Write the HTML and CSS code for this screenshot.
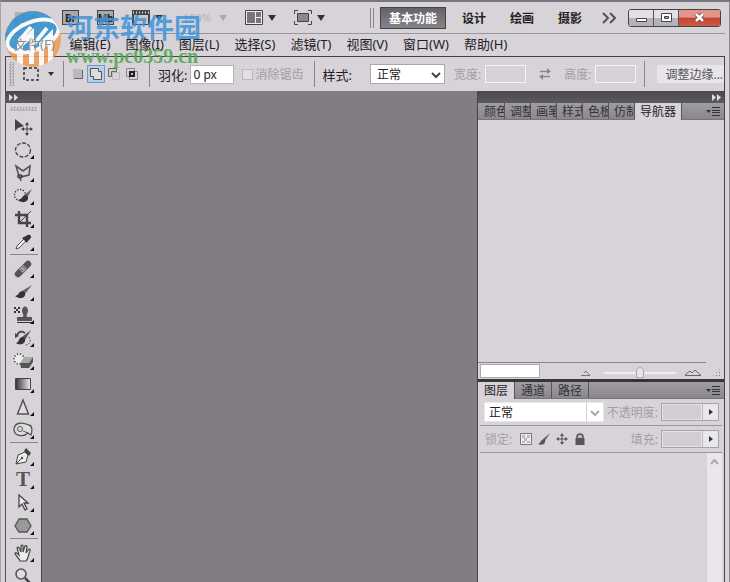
FILE: index.html
```
<!DOCTYPE html>
<html lang="zh-CN">
<head>
    <meta charset="UTF-8">
    <meta name="viewport" content="width=device-width, initial-scale=1.0">
    <title>Photoshop</title>
    <link rel="stylesheet" href="styles.css">
</head>
<body>
<div class="window">
    <!-- 标题栏 -->
    <header class="appbar">
        <b class="ps">Ps</b>
        <button class="app-icon badge">Br</button>
        <button class="app-icon badge">Mb</button>
        <button class="app-icon film" aria-label="查看额外内容">
            <svg width="18" height="15"><path d="M0 0h18v15H0z" fill="#444"/><path d="M2 5h14v9H2z" fill="#c9c7cb"/><path d="M1 2.500h16" stroke="#ddd" stroke-width="2" stroke-dasharray="1 2"/></svg>
            <i class="arrow"></i>
        </button>
        <button class="app-icon zoom">100%<i class="arrow"></i></button>
        <button class="app-icon" aria-label="排列文档">
            <svg width="18" height="15"><path d="M.5.5h17v14H.5z" fill="#eee" stroke="#444"/><path d="M2 2h8v11H2zM11 2h5v5h-5zM11 8h5v5h-5z" fill="#77757a"/></svg>
            <i class="arrow"></i>
        </button>
        <button class="app-icon" aria-label="屏幕模式">
            <svg width="18" height="15"><path d="M.5 4V.5H4M14 .5h3.500V4M17.500 11v3.500H14M4 14.500H.5V11" fill="none" stroke="#444"/><path d="M3.500 3.500h11v8h-11z" fill="#8a888c" stroke="#444"/></svg>
            <i class="arrow"></i>
        </button>
        <nav class="workspaces">
            <button class="ws on">基本功能</button>
            <button class="ws">设计</button>
            <button class="ws">绘画</button>
            <button class="ws">摄影</button>
            <button class="ws more" aria-label="更多"><svg width="14" height="12"><path d="M1 1l5 5-5 5M8 1l5 5-5 5" fill="none" stroke="#555" stroke-width="2"/></svg></button>
        </nav>
        <div class="win-btns">
            <button aria-label="最小化"><svg width="13" height="10"><path d="M1.500 5.500h10v3h-10z" fill="#fff" stroke="#444"/></svg></button>
            <button aria-label="最大化"><svg width="13" height="11"><path d="M1.500 1.500h10v8h-10z" fill="#fff" stroke="#444"/><path d="M4.500 4.500h4v2h-4z" fill="#aaa" stroke="#444"/></svg></button>
            <button class="close" aria-label="关闭"><svg width="13" height="11"><path d="M3 2l7 7M10 2l-7 7" stroke="#733" stroke-width="4"/><path d="M3 2l7 7M10 2l-7 7" stroke="#fff" stroke-width="2.500"/></svg></button>
        </div>
    </header>

    <!-- 菜单 -->
    <nav class="menu">
        <a href="#">文件(F)</a>
        <a href="#">编辑(E)</a>
        <a href="#">图像(I)</a>
        <a href="#">图层(L)</a>
        <a href="#">选择(S)</a>
        <a href="#">滤镜(T)</a>
        <a href="#">视图(V)</a>
        <a href="#">窗口(W)</a>
        <a href="#">帮助(H)</a>
    </nav>

    <!-- 选项栏 -->
    <div class="options">
        <span class="grip"></span>
        <button class="preset" aria-label="矩形选框工具">
            <svg width="16" height="14"><path d="M1 1h14v12H1z" fill="none" stroke="#333" stroke-width="1.500" stroke-dasharray="3 2"/></svg>
            <i class="arrow small"></i>
        </button>
        <div class="modes">
            <button aria-label="新选区"><svg width="14" height="14"><path d="M3 3h9v9H3z" fill="#666"/><path d="M2 2h9v9H2z" fill="#bbb9bd"/></svg></button>
            <button class="on" aria-label="添加到选区"><svg width="14" height="14"><path d="M1.500 1.500h8v3h3v8h-8v-3h-3z" fill="#ddd" stroke="#555"/></svg></button>
            <button aria-label="从选区减去"><svg width="14" height="14"><path d="M1.500 9.500v-8h8v3h-5v5z" fill="#ccc" stroke="#666"/><path d="M5.500 5.500h7v7h-7z" fill="none" stroke="#bbb"/></svg></button>
            <button aria-label="与选区交叉"><svg width="14" height="14"><path d="M1.500 1.500h8v8h-8zM4.500 4.500h8v8h-8z" fill="none" stroke="#888"/><path d="M5 5h4v4H5z" fill="#bbb" stroke="#222" stroke-width="2"/></svg></button>
        </div>
        <div class="group feather">
            <label for="feather">羽化:</label>
            <input id="feather" type="text" value="0 px">
            <label class="check off"><input type="checkbox" disabled>消除锯齿</label>
        </div>
        <div class="group style">
            <label for="style">样式:</label>
            <span class="select"><select id="style"><option>正常</option></select><svg width="10" height="7"><path d="M1 1l4 4 4-4" fill="none" stroke="#444" stroke-width="2"/></svg></span>
            <label class="off" for="w">宽度:</label>
            <input id="w" class="empty" type="text" disabled>
            <svg class="swap" width="12" height="12"><path d="M1 3.500h8M3 8.500h8" stroke="#888" stroke-width="1.500"/><path d="M8 0l4 3.500L8 6zM4 6L0 8.500 4 12z" fill="#888"/></svg>
            <label class="off" for="h">高度:</label>
            <input id="h" class="empty" type="text" disabled>
        </div>
        <button class="refine">调整边缘...</button>
    </div>

    <main class="work">
        <!-- 工具箱 -->
        <aside class="toolbox">
            <div class="bar"><svg width="9" height="7"><path d="M0 0l4 3.500L0 7zM5 0l4 3.500L5 7z" fill="#ddd"/></svg></div>
            <span class="grip-h"></span>
            <button class="tool single" aria-label="移动"><svg viewBox="0 0 18 18"><path d="M1 1v12l3-3 6-2z" fill="#444"/><path d="M13 6v10M8 11h10" stroke="#444"/><path d="M13 4l2 3h-4zM13 18l2-3h-4zM7 11l3-2v4zM19 11l-3-2v4z" fill="#444"/></svg></button>
            <button class="tool" aria-label="椭圆选框"><svg viewBox="0 0 18 18"><ellipse cx="9" cy="9" rx="7.500" ry="7" fill="none" stroke="#444" stroke-width="1.300" stroke-dasharray="4 1.500"/></svg></button>
            <button class="tool" aria-label="多边形套索"><svg viewBox="0 0 18 18"><path d="M5 12L2 2l7 5 7-5-1 9-9 2z" fill="none" stroke="#555" stroke-width="1.600"/><path d="M6 11c-3 0-3 3 0 3s3-3 0-3M6 14l1 3" fill="none" stroke="#444" stroke-width="1.300"/></svg></button>
            <button class="tool" aria-label="快速选择"><svg viewBox="0 0 18 18"><circle cx="6" cy="8" r="5.500" fill="none" stroke="#333" stroke-width="1.300" stroke-dasharray="1.300 1.500"/><path d="M18 2l-8 6 3 3z" fill="#666"/><path d="M12 8c-4 0-3 4-8 5 4 4 11 2 10-3z" fill="#333"/></svg></button>
            <button class="tool" aria-label="裁剪"><svg viewBox="0 0 18 18"><path d="M5 1v12h12M1 5h12v12" fill="none" stroke="#444" stroke-width="2.400"/><path d="M5 13L17 1" stroke="#444"/></svg></button>
            <button class="tool" aria-label="吸管"><svg viewBox="0 0 18 18"><path d="M2 16l1-3 7-7 2 2-7 7z" fill="#eee" stroke="#555"/><path d="M8 5l5 5 1-2 2-2c3-3-1-6-4-3l-2 1z" fill="#333"/></svg></button>
            <hr>
            <button class="tool" aria-label="污点修复画笔"><svg viewBox="0 0 18 18"><path d="M4 14L14 4" stroke="#555" stroke-width="6.500" stroke-linecap="round"/><path d="M7 11l4-4" stroke="#aaa" stroke-width="5"/><path d="M7 9l2 2M9 7l2 2" stroke="#555"/></svg></button>
            <button class="tool" aria-label="画笔"><svg viewBox="0 0 18 18"><path d="M18 2L8 8l3 3z" fill="#666"/><path d="M9 8c-5 0-3 4-8 5 5 4 11 2 10-3z" fill="#333"/></svg></button>
            <button class="tool" aria-label="仿制图章"><svg viewBox="0 0 18 18"><path d="M0 1h2v2H0zM4 1h2v2H4zM2 3h2v2H2zM0 5h2v2H0zM4 5h2v2H4z" fill="#333"/><path d="M3 11h6c1-3-1-4-1-6 0-6 6-6 6 0 0 2-2 3-1 6h5v4H3z" fill="#555"/><path d="M3 16.500h15" stroke="#333"/></svg></button>
            <button class="tool" aria-label="历史记录画笔"><svg viewBox="0 0 18 18"><path d="M17 1L8 8l3 3z" fill="#555"/><path d="M9 8c-5 0-3 5-7 6 4 3 10 1 9-4z" fill="#333"/><path d="M3 6c2-4 5-4 8-2" fill="none" stroke="#444" stroke-width="1.800"/><path d="M1 4v5l4-2z" fill="#444"/><path d="M15 8c3 4 0 8-4 8" fill="none" stroke="#444" stroke-dasharray="1.500 1.500"/></svg></button>
            <button class="tool" aria-label="橡皮擦"><svg viewBox="0 0 18 18"><circle cx="5" cy="7" r="5" fill="#eee" stroke="#444" stroke-width="2" stroke-dasharray="1 2"/><path d="M10 5h9l-4 6H6z" fill="#aaa"/><path d="M6 11h9v5H7zM15 11l4-6v5l-4 6z" fill="#555"/></svg></button>
            <button class="tool" aria-label="渐变"><svg viewBox="0 0 18 18"><defs><linearGradient id="g"><stop stop-color="#333"/><stop offset="1" stop-color="#eee"/></linearGradient></defs><path d="M1.500 3.500h15v11h-15z" fill="url(#g)" stroke="#444"/></svg></button>
            <button class="tool" aria-label="锐化"><svg viewBox="0 0 18 18"><path d="M9 2L3.500 16h11z" fill="#ddd" stroke="#555" stroke-width="1.500"/></svg></button>
            <button class="tool" aria-label="海绵"><svg viewBox="0 0 18 18"><path d="M0 8c1-8 10-6 15-4 4 1 3 7 2 10l-3-2c-4 4-14 4-14-4z" fill="#ddd" stroke="#555" stroke-width="1.300"/><circle cx="6" cy="8" r="2.500" fill="none" stroke="#555"/><path d="M9 10l5 2" stroke="#555"/></svg></button>
            <hr>
            <button class="tool" aria-label="钢笔"><svg viewBox="0 0 18 18"><path d="M2 16L4 7l7-3 3 3-2 7z" fill="#eee" stroke="#444"/><path d="M2 16l6-6" stroke="#444"/><circle cx="8" cy="10" r="1.200" fill="#444"/><path d="M10 3l2-3 5 5-2 3z" fill="#444"/></svg></button>
            <button class="tool type" aria-label="文字">T</button>
            <button class="tool" aria-label="路径选择"><svg viewBox="0 0 18 18"><path d="M5 1v12l3-3 3 6 2-1-3-6h4z" fill="#eee" stroke="#444" stroke-width="1.300"/></svg></button>
            <button class="tool" aria-label="多边形"><svg viewBox="0 0 18 18"><path d="M5 2h8l4 7-4 6H5L1 9z" fill="#999" stroke="#555" stroke-width="1.300"/></svg></button>
            <hr>
            <button class="tool" aria-label="抓手"><svg viewBox="0 0 18 18"><path d="M6 17c-1-3-5-6-5-8 2-1 3 1 4 2L3 4c1-2 2 0 2 0l2 4V2c1-2 2 0 2 0v6l2-6c2-1 2 1 2 1l-1 6 3-4c2 0 1 2 1 2-2 4-1 7-4 10z" fill="#eee" stroke="#444" stroke-width="1.200"/></svg></button>
            <button class="tool single" aria-label="缩放"><svg viewBox="0 0 18 18"><circle cx="7" cy="7" r="5" fill="#ddd" stroke="#555" stroke-width="1.600"/><path d="M11 11l6 6" stroke="#444" stroke-width="2.500"/></svg></button>
        </aside>

        <div class="canvas"></div>

        <!-- 面板 -->
        <aside class="panels">
            <div class="bar right"><svg width="9" height="7"><path d="M0 0l4 3.500L0 7zM5 0l4 3.500L5 7z" fill="#ddd"/></svg></div>
            <section class="navigator">
                <div class="tabs clip">
                    <button>颜色</button>
                    <button>调整</button>
                    <button>画笔</button>
                    <button>样式</button>
                    <button>色板</button>
                    <button>仿制</button>
                    <button class="on">导航器</button>
                    <svg class="flyout" width="14" height="9"><path d="M0 3h5L2.500 6zM6 0h8v1H6zM6 3h8v1H6zM6 5h8v1H6zM6 8h8v1H6z" fill="#333"/></svg>
                </div>
                <div class="preview"></div>
                <div class="nav-foot">
                    <input type="text" aria-label="缩放比例">
                    <svg width="12" height="8"><path d="M1 6.500h9L6 2 4 4" fill="none" stroke="#777"/></svg>
                    <input type="range" min="0" max="100" value="50" aria-label="缩放滑块">
                    <svg width="18" height="8"><path d="M1 6.500h16L11 1 8 4 6 2 1 6" fill="none" stroke="#666"/></svg>
                    <span class="resize"></span>
                </div>
            </section>
            <section class="layers">
                <div class="tabs">
                    <button class="on">图层</button>
                    <button>通道</button>
                    <button>路径</button>
                    <svg class="flyout" width="14" height="9"><path d="M0 3h5L2.500 6zM6 0h8v1H6zM6 3h8v1H6zM6 5h8v1H6zM6 8h8v1H6z" fill="#333"/></svg>
                </div>
                <div class="row">
                    <span class="select blend"><select aria-label="混合模式"><option>正常</option></select><svg width="10" height="7"><path d="M1 1l4 4 4-4" fill="none" stroke="#aaa" stroke-width="2"/></svg></span>
                    <label class="off push" for="opacity">不透明度:</label>
                    <span class="stepper"><input id="opacity" type="text" disabled><button aria-label="不透明度滑块"><svg width="4" height="6"><path d="M0 0l4 3-4 3z" fill="#333"/></svg></button></span>
                </div>
                <div class="row">
                    <span class="off">锁定:</span>
                    <span class="locks">
                        <svg width="12" height="12"><path d="M.5.5h11v11H.5z" fill="#eee" stroke="#777"/><path d="M2 2h3v3H2zM7 2h3v3H7zM4 5h3v3H4zM2 8h3v2H2zM7 8h3v2H7z" fill="#bbb"/></svg>
                        <svg width="12" height="12"><path d="M12 0L5 6l2 2z" fill="#666"/><path d="M6 6c-3 0-3 4-6 5 4 2 8 0 7-4z" fill="#555"/></svg>
                        <svg width="12" height="12"><path d="M6 1v10M1 6h10" stroke="#555"/><path d="M6 0l2 3H4zM6 12l2-3H4zM0 6l3-2v4zM12 6L9 4v4z" fill="#555"/></svg>
                        <svg width="12" height="12"><path d="M3 6V4c0-4 6-4 6 0v2" fill="#bbb" stroke="#555" stroke-width="1.500"/><path d="M1.500 5h9v7h-9z" fill="#555"/></svg>
                    </span>
                    <label class="off push" for="fill">填充:</label>
                    <span class="stepper"><input id="fill" type="text" disabled><button aria-label="填充滑块"><svg width="4" height="6"><path d="M0 0l4 3-4 3z" fill="#333"/></svg></button></span>
                </div>
                <div class="list"><div class="scroll"><svg width="9" height="7"><path d="M1 5l3.500-4L8 5" fill="none" stroke="#aaa" stroke-width="2"/></svg></div></div>
            </section>
        </aside>
    </main>
</div>

<!-- 水印 -->
<div class="watermark">
    <svg width="56" height="56" viewBox="0 0 56 56">
        <defs><clipPath id="disc"><circle cx="28" cy="28" r="28"/></clipPath></defs>
        <g clip-path="url(#disc)">
            <path d="M0 0h56v56H0z" fill="#f29a50"/>
            <path d="M0 0h56v17C44 40 20 42 0 38z" fill="#2f8fce"/>
            <path d="M12 33l17-16v36h-5V30l-6 5v21h-6zM34 32l14-14v36h-5V32l-4 4v20h-5z" fill="#fff"/>
            <path d="M14 30l12-14M29 33l13-16" stroke="#fff" stroke-width="4"/>
            <ellipse cx="28" cy="25" rx="27" ry="14" transform="rotate(-22 28 25)" fill="none" stroke="#fff" stroke-width="4"/>
            <circle cx="18" cy="14" r="2" fill="#fff"/>
        </g>
    </svg>
    <div>
        <b class="wm-name">河东软件园</b>
        <b class="wm-url">www.pc0359.cn</b>
    </div>
</div>
</body>
</html>
```
FILE: styles.css
```
*{
    box-sizing: border-box;
}

body{
    margin: 0;
    font-family: "Noto Sans", "Noto Sans CJK SC", sans-serif;
    font-size: 12px;
    color: #222;
}

button, input, select{
    font: inherit;
    color: inherit;
    margin: 0;
    padding: 0;
    border: 0;
    background: none;
    border-radius: 0;
}
svg{
    display: block;
    flex: none;
}
label, a, button{
    white-space: nowrap;
}

.window{
    display: flex;
    flex-direction: column;
    height: 100vh;
    overflow: hidden;
    padding: 0 4px;
    background: #d7d3d9;
    border-top: 2px solid #77757d;
    border-right: 1px solid #8a8890;
    border-left: 1px solid #a5a3aa;
}

.arrow{
    border: 4px solid transparent;
    border-top: 6px solid #333;
    border-bottom: 0;
}
.arrow.small{
    border-width: 4px 3px 0;
}
.off{
    color: #a19fa4;
}

/* 标题栏 */
.appbar{
    display: flex;
    flex: none;
    align-items: center;
    height: 32px;
    padding: 0 4px 0 8px;
    border-bottom: 1px solid #98959b;
}
.ps{
    width: 31px;
    font-size: 22px;
    line-height: 24px;
    color: #aeb0b4;
}
.app-icon{
    display: flex;
    align-items: center;
    gap: 5px;
    margin-left: 18px;
}
.badge{
    justify-content: center;
    width: 17px;
    height: 15px;
    border: 1px solid #444;
    background: #a9a7ac;
    font-size: 10px;
    line-height: 12px;
    font-weight: bold;
}
.zoom{
    margin-left: 20px;
    color: #b4b2b7;
    font-size: 11px;
    gap: 8px;
}
.zoom .arrow{
    border-top-color: #aaa8ad;
}
.workspaces{
    display: flex;
    align-items: center;
    margin-left: auto;
    padding-left: 6px;
    border-left: 4px double #88858b;
    height: 20px;
}
.ws{
    height: 22px;
    padding: 0 12px;
    font-weight: bold;
}
.ws.on{
    margin-right: 4px;
    padding: 0 8px;
    border: 1px solid #444;
    background: linear-gradient(#656368, #858288);
    color: #fff;
}
.ws.more{
    padding: 0 12px 0 8px;
}
.win-btns{
    display: flex;
    height: 18px;
    border: 1px solid #444;
    border-radius: 3px;
    overflow: hidden;
}
.win-btns button{
    display: flex;
    align-items: center;
    justify-content: center;
    width: 25px;
    border-right: 1px solid #555;
    background: linear-gradient(#e2e0e4 50%, #b5b3b9 50%);
}
.win-btns .close{
    width: 41px;
    border: 0;
    background: linear-gradient(#e2968a 45%, #c24530 50%, #cb5c44);
}

/* 菜单 */
.menu{
    position: relative;
    z-index: 2;
    display: flex;
    flex: none;
    gap: 15px;
    height: 22px;
    padding-left: 9px;
    line-height: 21px;
    font-size: 13px;
}
.menu a{
    color: #222;
    text-decoration: none;
}
.menu a:first-child{
    color: #8b8d93;
}

/* 选项栏 */
.options{
    display: flex;
    flex: none;
    align-items: center;
    height: 35px;
    border: 1px solid #444;
    border-bottom: 0;
    overflow: hidden;
}
.grip{
    width: 5px;
    height: 24px;
    margin-left: 3px;
    background: repeating-conic-gradient(#aaa 0 25%, transparent 0 50%) 0 0 / 3px 3px;
}
.preset{
    display: flex;
    align-items: center;
    gap: 9px;
    height: 26px;
    padding: 0 9px;
    border-right: 1px solid #88858b;
}
.modes{
    display: flex;
    align-items: center;
    height: 26px;
    padding: 0 8px 0 5px;
    border-right: 1px solid #88858b;
}
.modes button{
    width: 18px;
    height: 18px;
    padding: 1px;
    border: 1px solid transparent;
}
.modes .on{
    border-color: #6f9bc8;
    background: #b5cfe8;
}
.group{
    display: flex;
    align-items: center;
    height: 26px;
    padding: 0 8px;
    border-right: 1px solid #88858b;
}
.feather > label:first-child, .style > label:first-child{
    font-size: 13px;
}
#feather{
    width: 44px;
    height: 19px;
    margin: 0 8px 0 3px;
    padding-left: 2px;
    border: 1px solid #b5b3b8;
    background: #fff;
}
.check{
    display: flex;
    align-items: center;
    gap: 2px;
    padding-right: 2px;
}
.check input{
    appearance: none;
    width: 11px;
    height: 11px;
    border: 1px solid #bbb8bd;
    background: #e2dfe4;
}
.select{
    position: relative;
    display: inline-block;
    background: #fff;
    border: 1px solid #aaa8ad;
}
.select select{
    appearance: none;
    width: 100%;
    height: 100%;
    padding-left: 6px;
}
.select svg{
    position: absolute;
    right: 3px;
    top: 7px;
    pointer-events: none;
}
.style .select{
    width: 75px;
    height: 20px;
    margin: 0 9px 0 18px;
}
.empty{
    width: 41px;
    height: 18px;
    margin-left: 4px;
    border: 1px solid #f5f3f6;
    background: #d5d1d7;
}
.swap{
    margin: 0 13px;
}
.refine{
    flex: 1;
    height: 18px;
    margin-left: 12px;
    padding-left: 8px;
    background: #e8e5ea;
    color: #555;
    text-align: left;
    overflow: hidden;
}

/* 工作区 */
.work{
    display: flex;
    flex: 1;
    min-height: 0;
}
.bar{
    display: flex;
    align-items: center;
    flex: none;
    height: 12px;
    padding: 0 3px;
    background: linear-gradient(#4a484d, #5c5a5f);
}
.bar.right{
    justify-content: flex-end;
}
.toolbox{
    display: flex;
    flex-direction: column;
    flex: none;
    width: 37px;
    border-left: 1px solid #555;
    border-right: 1px solid #444;
    overflow: hidden;
}
.grip-h{
    flex: none;
    height: 4px;
    margin: 4px 4px;
    background: repeating-conic-gradient(#aaa 0 25%, transparent 0 50%) 0 0 / 3px 3px;
}
.tool{
    position: relative;
    flex: none;
    height: 23px;
    padding-left: 8px;
}
.tool svg{
    width: 18px;
    height: 18px;
    overflow: visible;
}
.tool::after{
    content: "";
    position: absolute;
    right: 7px;
    bottom: 2px;
    border-left: 4px solid transparent;
    border-bottom: 4px solid #111;
}
.tool.single::after{
    display: none;
}
.tool.type{
    padding-left: 10px;
    text-align: left;
    font-family: "Liberation Serif", serif;
    font-size: 21px;
    line-height: 21px;
    font-weight: bold;
    color: #555;
}
.toolbox hr{
    flex: none;
    width: 28px;
    margin: 1px auto 2px;
    border: 0;
    border-top: 1px solid #88858b;
}
.canvas{
    flex: 1;
    background: #827d82;
}

/* 面板 */
.panels{
    display: flex;
    flex-direction: column;
    flex: none;
    width: 248px;
    border-left: 1px solid #444;
    border-right: 1px solid #444;
}
.tabs{
    display: flex;
    flex: none;
    height: 17px;
    background: linear-gradient(#a09da2, #8a878c);
    border-bottom: 1px solid #77747a;
}
.tabs button{
    padding: 0 6px;
    border-right: 1px solid #555;
    line-height: 17px;
    color: #333;
}
.tabs .on{
    height: 17px;
    background: #d7d3d9;
    color: #222;
}
.tabs.clip{
    padding-left: 1px;
}
.tabs.clip button:not(.on){
    width: 26px;
    padding: 0 0 0 5px;
    overflow: hidden;
    text-align: left;
}
.tabs.clip .on{
    padding: 0 5px;
}
.flyout{
    margin: 4px 4px 0 auto;
}
.navigator{
    display: flex;
    flex-direction: column;
    flex: none;
    border-bottom: 3px solid #37353a;
}
.preview{
    height: 243px;
    margin-right: 18px;
    border-bottom: 1px solid #88858b;
}
.nav-foot{
    display: flex;
    align-items: center;
    height: 16px;
    padding: 0 3px 0 2px;
}
.nav-foot svg, .nav-foot input[type=range], .resize{
    margin-top: 3px;
}
.nav-foot input[type=text]{
    width: 60px;
    height: 14px;
    margin-right: 40px;
    border: 1px solid #aaa;
    background: #fff;
}
.nav-foot input[type=range]{
    appearance: none;
    flex: 1;
    min-width: 0;
    height: 12px;
    margin-left: 12px;
    margin-right: 8px;
    background: linear-gradient(#eeecf0, #eeecf0) center / 100% 2px no-repeat;
}
.nav-foot input[type=range]::-webkit-slider-thumb{
    appearance: none;
    width: 8px;
    height: 11px;
    border: 1px solid #aaa;
    border-radius: 4px 4px 0 0;
    background: #e6e4e8;
}
.resize{
    width: 9px;
    height: 9px;
    margin-left: 10px;
    background: radial-gradient(#777 1px, transparent 1px) 0 0 / 3px 3px;
    clip-path: polygon(100% 0, 100% 100%, 0 100%);
}

.layers{
    display: flex;
    flex-direction: column;
    flex: 1;
    min-height: 0;
}
.row{
    display: flex;
    flex: none;
    align-items: center;
    height: 27px;
    margin: 0 2px;
    padding: 0 3px 0 5px;
    border-bottom: 1px solid #98959b;
}
.blend{
    width: 120px;
    height: 20px;
    margin-left: -1px;
    border-color: #e8e6ea;
}
.blend select{
    padding-left: 4px;
    background: linear-gradient(#d0ced3, #d0ced3) 101px 0 / 1px 100% no-repeat;
}
.push{
    margin-left: auto;
}
.stepper{
    display: flex;
    width: 58px;
    height: 18px;
    margin-left: 3px;
    border: 1px solid #a5a3a8;
}
.stepper input{
    flex: 1;
    min-width: 0;
    border: 1px solid #e5e3e7;
    background: #d1cdd3;
}
.stepper button{
    display: flex;
    align-items: center;
    justify-content: center;
    width: 16px;
    border-left: 1px solid #bbb;
    background: #e9e7eb;
}
.locks{
    display: flex;
    gap: 6px;
    margin-left: 8px;
}
.list{
    display: flex;
    justify-content: flex-end;
    flex: 1;
    padding-right: 2px;
}
.scroll{
    width: 15px;
    padding: 6px 3px;
    background: #e9e7eb;
}

/* 水印 */
.watermark{
    position: absolute;
    z-index: 1;
    top: 11px;
    left: 5px;
    display: flex;
    gap: 5px;
    opacity: .85;
    pointer-events: none;
}
.watermark b{
    display: block;
    white-space: nowrap;
}
.wm-name{
    margin-top: 2px;
    font-size: 27px;
    line-height: 30px;
    color: #3d94dc;
}
.wm-url{
    font-family: "Liberation Serif", serif;
    font-size: 20px;
    line-height: 26px;
    color: #4fa650;
}
```
